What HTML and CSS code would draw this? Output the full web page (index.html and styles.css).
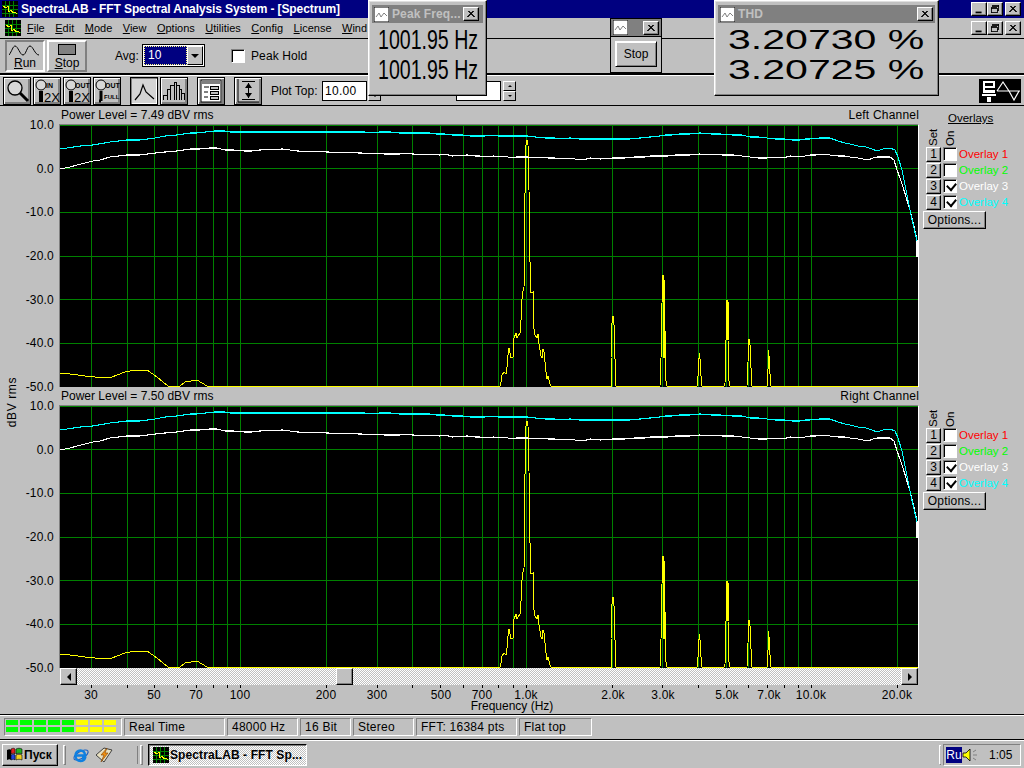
FILE: index.html
```html
<!DOCTYPE html>
<html lang="en">
<head>
<meta charset="utf-8">
<title>SpectraLAB</title>
<link rel="stylesheet" href="styles.css">
</head>
<body>
<svg class="defs" width="0" height="0" aria-hidden="true">
  <defs>
    <symbol id="appicon" viewBox="0 0 16 16">
      <rect width="16" height="16" fill="#000"/>
      <path d="M0 4.5H16M0 8.5H16M0 12.5H16M3.5 0V16M7.5 0V16M11.5 0V16" stroke="#008000" fill="none"/>
      <path d="M1 5L4 7L6 5L7 11L9 9L11 12L13 11L15 13" stroke="#ffff00" fill="none" shape-rendering="crispEdges"/>
    </symbol>
    <symbol id="winicon" viewBox="0 0 15 15">
      <rect width="15" height="15" fill="#fff" stroke="#000"/>
      <path d="M2 10L5 6L7 10L10 6L13 9" stroke="#808080" fill="none"/>
    </symbol>
    <symbol id="close" viewBox="0 0 16 14">
      <path d="M4 3L11 10M5 3L12 10M11 3L4 10M12 3L5 10" stroke="#000" fill="none" shape-rendering="crispEdges"/>
    </symbol>
    <symbol id="min" viewBox="0 0 16 14"><rect x="4" y="10" width="7" height="2" fill="#000"/></symbol>
    <symbol id="restore" viewBox="0 0 16 14">
      <path d="M5.5 2.5H12.5V8.5H10.5M5.5 2.5V5M5.5 3.5H12.5M3.5 5.5H10.5V11.5H3.5ZM3.5 6.5H10.5" stroke="#000" fill="none" shape-rendering="crispEdges"/>
    </symbol>
    <symbol id="traces" viewBox="60 125 858 262" overflow="hidden">
      <g shape-rendering="crispEdges" stroke="#008000" fill="none">
        <path d="M60 125.5H918M60 168.5H918M60 212.5H918M60 256.5H918M60 299.5H918M60 343.5H918"/>
        <path d="M91.5 125V387M127.5 125V387M154.5 125V387M177.5 125V387M196.5 125V387M213.5 125V387M227.5 125V387M240.5 125V387M326.5 125V387M377.5 125V387M412.5 125V387M440.5 125V387M463.5 125V387M482.5 125V387M498.5 125V387M513.5 125V387M526.5 125V387M612.5 125V387M662.5 125V387M698.5 125V387M726.5 125V387M748.5 125V387M767.5 125V387M784.5 125V387M798.5 125V387M811.5 125V387M897.5 125V387"/>
      </g>
      <g shape-rendering="crispEdges" fill="none">
        <polyline stroke="#ffff00" points="60,373 70,374 85,376 95,377 112,377 125,372 130,371 147,370 157,377 168,386 180,386 185,382 197,380 207,386 500,386 501,382 502,375 504,372 506,374 507,367 508,355 509,348 511,358 513,357 514,338 516,333 517,338 520,333 521,320 522,299 523,291 524,288 525,193 526,145 527,140 528,145 529,190 530,262 531,293 533,292 533,323 535,335 537,338 538,334 539,344 541,356 542,358 543,349 544,352 546,372 547,379 548,376 550,384 551,386 611,386 611,358 612,323 613,316 614,325 615,359 616,386 660,386 661,358 662,303 663,275 664,280 665,330 666,381 667,386 697,386 698,376 699,358 699,353 700,359 701,376 702,386 724,386 725,383 726,340 726,300 728,302 728,340 729,381 730,386 747,386 748,362 749,339 750,345 751,368 752,386 767,386 768,369 768,350 769,356 770,374 771,386 918,386"/>
        <path stroke="#ffff00" d="M663.5 275V358M664.5 280V358M727.5 300V340"/>
        <polyline stroke="#ffffff" stroke-width="1.1" points="60,169 70,167 77,165 85,163 93,161 100,160 110,157 127,155 140,155 155,153 165,152 177,151 190,149 200,149 210,148 217,148 225,150 233,150 245,151 252,151 260,150 282,149 290,150 297,151 327,152 360,153 385,154 400,154 405,153 412,154 440,155 445,154 452,156 467,155 475,156 480,156 485,157 494,156 500,157 505,156 511,158 516,157 527,157 535,158 540,157 548,158 555,158 562,159 567,158 575,159 583,160 590,158 600,159 613,158 625,158 635,157 645,157 650,156 660,156 668,156 675,155 682,155 690,155 700,154 708,155 715,154 722,155 733,155 742,156 750,157 758,158 767,158 775,157 783,158 790,156 800,157 810,155 816,155 823,154 830,155 838,156 845,156 850,157 858,158 868,160 873,158 877,157 885,157 890,157 894,160 897,170 900,178 903,187 906,197 910,210 913,222 917,240 917,257"/>
        <polyline stroke="#00ffff" stroke-width="1.1" points="60,149 67,148 80,146 93,145 110,142 127,140 140,140 155,138 165,136 177,135 190,133 197,133 205,132 215,131 225,131 230,132 365,132 372,133 380,132 390,132 400,133 430,133 436,134 445,134 452,135 463,135 470,136 485,136 490,135 498,136 510,136 520,136 527,136 535,137 545,138 555,138 562,139 570,138 580,139 590,139 600,139 613,139 620,139 630,139 640,138 650,137 660,136 665,135 672,135 680,134 690,134 700,133 712,134 720,134 733,135 742,135 750,137 758,137 767,138 775,139 785,139 792,140 800,140 805,139 810,139 820,138 830,138 838,141 845,143 850,144 858,146 866,147 872,149 877,151 883,149 890,148 895,150 898,157 902,170 905,185 908,200 911,215 914,228 917,241"/>
      </g>
    </symbol>
    <symbol id="logo" viewBox="0 0 42 24">
      <rect width="42" height="24" fill="#000"/>
      <path d="M4 2H16V9H6V11H16V14H4ZM6 4V7H14V4Z M3 15H17V17H3Z M8 18H12V23H8Z" fill="#fff" fill-rule="evenodd"/>
      <path d="M18 12L24 3L30 12L35 21L40 12M18 12H41" stroke="#fff" stroke-width="1.2" fill="none"/>
    </symbol>
  </defs>
</svg>

<header class="titlebar">
  <svg class="icon16 tb-icon"><use href="#appicon"/></svg>
  <span class="title">SpectraLAB - FFT Spectral Analysis System - [Spectrum]</span>
  <div class="capbtns">
    <button class="cap"><svg class="capglyph"><use href="#min"/></svg></button>
    <button class="cap"><svg class="capglyph"><use href="#restore"/></svg></button>
    <button class="cap cap-close"><svg class="capglyph"><use href="#close"/></svg></button>
  </div>
</header>

<nav class="menubar">
  <svg class="icon16 menu-icon"><use href="#appicon"/></svg>
  <span class="mi"><u>F</u>ile</span>
  <span class="mi"><u>E</u>dit</span>
  <span class="mi"><u>M</u>ode</span>
  <span class="mi"><u>V</u>iew</span>
  <span class="mi"><u>O</u>ptions</span>
  <span class="mi"><u>U</u>tilities</span>
  <span class="mi"><u>C</u>onfig</span>
  <span class="mi"><u>L</u>icense</span>
  <span class="mi"><u>W</u>ind</span>
  <div class="capbtns capbtns-menu">
    <button class="cap"><svg class="capglyph"><use href="#min"/></svg></button>
    <button class="cap"><svg class="capglyph"><use href="#restore"/></svg></button>
    <button class="cap cap-close"><svg class="capglyph"><use href="#close"/></svg></button>
  </div>
</nav>

<section class="tools1">
  <button class="bigbtn bigbtn-run">
    <svg class="bigicon" viewBox="0 0 32 13"><path d="M0 11C3 7 4 2 6 2C9 2 11 11 14 11C17 11 18 2 21 2C24 2 26 11 30 11" stroke="#000" fill="none"/></svg>
    <span class="biglabel"><u>R</u>un</span>
  </button>
  <button class="bigbtn">
    <span class="stopicon"></span>
    <span class="biglabel"><u>S</u>top</span>
  </button>
  <span class="avg">Avg:</span>
  <div class="combo"><span class="combo-val">10</span><span class="combo-arrow"><i class="tri"></i></span></div>
  <span class="check check-peak"></span>
  <span class="peak">Peak Hold</span>
</section>

<section class="tools2">
  <button class="tbtn"><svg viewBox="0 0 26 26" class="ticon"><circle cx="11" cy="10" r="7" fill="#d8d8d8" stroke="#000" stroke-width="1.3"/><path d="M16 15L24 23" stroke="#000" stroke-width="3"/></svg></button>
  <button class="tbtn"><svg viewBox="0 0 26 26" class="ticon"><circle cx="7" cy="7" r="5" fill="#d8d8d8" stroke="#000"/><rect x="5" y="13" width="4" height="11" fill="#000"/><text x="12" y="10" class="t-s">IN</text><text x="10" y="24" class="t-l">2X</text></svg></button>
  <button class="tbtn"><svg viewBox="0 0 26 26" class="ticon"><circle cx="7" cy="7" r="5" fill="#d8d8d8" stroke="#000"/><rect x="5" y="13" width="4" height="11" fill="#000"/><text x="11" y="10" class="t-s">OUT</text><text x="10" y="24" class="t-l">2X</text></svg></button>
  <button class="tbtn"><svg viewBox="0 0 26 26" class="ticon"><circle cx="7" cy="7" r="5" fill="#d8d8d8" stroke="#000"/><path d="M7 13V23M7 23H5" stroke="#000" stroke-width="3" fill="none"/><text x="11" y="10" class="t-s">OUT</text><text x="10" y="21" class="t-xs">FULL</text></svg></button>
  <button class="tbtn tbtn-on tbtn-gap"><svg viewBox="0 0 26 26" class="ticon"><path d="M4 22L9 16L12 7L15 14L23 21" stroke="#000" stroke-width="1.2" fill="none"/></svg></button>
  <button class="tbtn"><svg viewBox="0 0 26 26" class="ticon"><path d="M2 22V17H6V11H9V7H13V4H15V7H18V11H20V15H23V22M6 22V17M9 22V11M13 22V7M15 22V7M18 22V11M20 22V15" stroke="#000" fill="none" shape-rendering="crispEdges"/></svg></button>
  <button class="tbtn tbtn-gap2"><svg viewBox="0 0 26 26" class="ticon"><rect x="3" y="2" width="20" height="22" fill="#fff" stroke="#000"/><rect x="4" y="3" width="18" height="3" fill="#808080"/><path d="M6 9H11M6 14H10M6 19H10" stroke="#000"/><rect x="12.500" y="8.500" width="8" height="3" fill="#c0c0c0" stroke="#000"/><rect x="12.500" y="13.500" width="8" height="3" fill="#c0c0c0" stroke="#000"/><rect x="12.500" y="18.500" width="8" height="3" fill="#c0c0c0" stroke="#000"/></svg></button>
  <button class="tbtn tbtn-gap3"><svg viewBox="0 0 26 26" class="ticon"><path d="M7 3.500H20M7 21.500H20M13.500 5V20" stroke="#000" fill="none" shape-rendering="crispEdges"/><path d="M13.500 5L10 10H17ZM13.500 20L10 15H17Z" fill="#000"/><path d="M3 1V24H24" stroke="#000" fill="none"/></svg></button>
  <span class="plottop">Plot Top:</span>
  <span class="numbox">10.00</span>
  <div class="spin spin-a"><span class="spin-btn"></span><span class="spin-btn"><i class="tri tri-s"></i></span></div>
  <span class="numbox numbox-b"></span>
  <div class="spin"><span class="spin-btn"><i class="tri tri-s tri-up"></i></span><span class="spin-btn"><i class="tri tri-s"></i></span></div>
  <svg class="logo"><use href="#logo"/></svg>
</section>

<main class="main">
  <div class="ylabel"><span>dBV rms</span></div>
  <div class="charts">
    <section class="panel">
      <div class="head"><span>Power Level = 7.49 dBV rms</span><span>Left Channel</span></div>
      <div class="yticks"><span>10.0</span><span>0.0</span><span>-10.0</span><span>-20.0</span><span>-30.0</span><span>-40.0</span><span>-50.0</span></div>
      <div class="plot"><svg class="plot-svg"><use href="#traces"/></svg></div>
      <aside class="overlays">
        <div class="ov-title">Overlays</div>
        <div class="ov-heads"><span>Set</span><span>On</span></div>
        <div class="ov-row"><button class="setbtn">1</button><span class="check"></span><span class="ov-name c-red">Overlay 1</span></div>
        <div class="ov-row"><button class="setbtn">2</button><span class="check"></span><span class="ov-name c-green">Overlay 2</span></div>
        <div class="ov-row"><button class="setbtn">3</button><span class="check is-on"></span><span class="ov-name c-white">Overlay 3</span></div>
        <div class="ov-row"><button class="setbtn">4</button><span class="check is-on"></span><span class="ov-name c-cyan">Overlay 4</span></div>
        <button class="optbtn">Options...</button>
      </aside>
    </section>
    <section class="panel">
      <div class="head"><span>Power Level = 7.50 dBV rms</span><span>Right Channel</span></div>
      <div class="yticks"><span>10.0</span><span>0.0</span><span>-10.0</span><span>-20.0</span><span>-30.0</span><span>-40.0</span><span>-50.0</span></div>
      <div class="plot"><svg class="plot-svg"><use href="#traces"/></svg></div>
      <aside class="overlays">
        <div class="ov-title ov-title-hidden"></div>
        <div class="ov-heads"><span>Set</span><span>On</span></div>
        <div class="ov-row"><button class="setbtn">1</button><span class="check"></span><span class="ov-name c-red">Overlay 1</span></div>
        <div class="ov-row"><button class="setbtn">2</button><span class="check"></span><span class="ov-name c-green">Overlay 2</span></div>
        <div class="ov-row"><button class="setbtn">3</button><span class="check is-on"></span><span class="ov-name c-white">Overlay 3</span></div>
        <div class="ov-row"><button class="setbtn">4</button><span class="check is-on"></span><span class="ov-name c-cyan">Overlay 4</span></div>
        <button class="optbtn">Options...</button>
      </aside>
    </section>
    <div class="xaxis">
      <div class="scroll">
        <button class="scr-btn"><i class="tri tri-left"></i></button>
        <span class="scr-track scr-track-a"></span>
        <button class="scr-thumb"></button>
        <span class="scr-track"></span>
        <button class="scr-btn"><i class="tri tri-right"></i></button>
      </div>
      <svg class="xticks" viewBox="60 0 858 3"><path d="M91.5 0V3M127.5 0V3M154.5 0V3M177.5 0V3M196.5 0V3M213.5 0V3M227.5 0V3M240.5 0V3M326.5 0V3M377.5 0V3M412.5 0V3M440.5 0V3M463.5 0V3M482.5 0V3M498.5 0V3M513.5 0V3M526.5 0V3M612.5 0V3M662.5 0V3M698.5 0V3M726.5 0V3M748.5 0V3M767.5 0V3M784.5 0V3M798.5 0V3M811.5 0V3M897.5 0V3" stroke="#000" fill="none" shape-rendering="crispEdges"/></svg>
      <div class="xlabels">
        <span style="left:31px">30</span><span style="left:94px">50</span><span style="left:136px">70</span><span style="left:180px">100</span><span style="left:266px">200</span><span style="left:317px">300</span><span style="left:381px">500</span><span style="left:422px">700</span><span style="left:466px">1.0k</span><span style="left:553px">2.0k</span><span style="left:603px">3.0k</span><span style="left:667px">5.0k</span><span style="left:709px">7.0k</span><span style="left:751px">10.0k</span><span style="left:837px">20.0k</span>
      </div>
      <div class="xtitle">Frequency (Hz)</div>
    </div>
  </div>
</main>

<footer class="status">
  <div class="cell cell-led">
    <i class="led g"></i><i class="led g"></i><i class="led g"></i><i class="led g"></i><i class="led g"></i><i class="led y"></i><i class="led y"></i><i class="led y"></i>
    <i class="led g"></i><i class="led g"></i><i class="led g"></i><i class="led g"></i><i class="led g"></i><i class="led y"></i><i class="led y"></i><i class="led y"></i>
  </div>
  <div class="cell">Real Time</div>
  <div class="cell">48000 Hz</div>
  <div class="cell">16 Bit</div>
  <div class="cell">Stereo</div>
  <div class="cell">FFT: 16384 pts</div>
  <div class="cell">Flat top</div>
</footer>

<footer class="taskbar">
  <button class="start">
    <svg class="flag" viewBox="0 0 18 16"><path d="M1 3C3 2 4 2 5 3V13C4 12 3 12 1 13Z" fill="#000"/><path d="M5 2C7 1 8 1 9 2V7C8 6 7 6 5 7Z" fill="#e02020" stroke="#000" stroke-width=".6"/><path d="M10 2C12 1 14 1 16 2V7C14 6 12 6 10 7Z" fill="#20b020" stroke="#000" stroke-width=".6"/><path d="M5 8C7 7 8 7 9 8V13C8 12 7 12 5 13Z" fill="#2040e0" stroke="#000" stroke-width=".6"/><path d="M10 8C12 7 14 7 16 8V13C14 12 12 12 10 13Z" fill="#f0d020" stroke="#000" stroke-width=".6"/></svg>
    <span>Пуск</span>
  </button>
  <span class="grip grip-a"></span>
  <svg class="quick quick-ie" viewBox="0 0 18 18"><ellipse cx="9" cy="9" rx="8" ry="3.500" fill="none" stroke="#2060c0" stroke-width="1.2" transform="rotate(-30 9 9)"/><path d="M4 9.500H13C13 6 11 4.500 8.500 4.500C5.500 4.500 3.500 6.500 3.500 9.500C3.500 12.500 5.500 15 8.500 15C11 15 12.500 13.500 13 12H10" fill="none" stroke="#1080e0" stroke-width="2.400"/></svg>
  <svg class="quick quick-wa" viewBox="0 0 18 18"><path d="M1 9L9 2L17 4L9 16Z" fill="#e8e0c0" stroke="#404040"/><path d="M12 2L6 9H9L6 16L13 7H10Z" fill="#f09010" stroke="#804000" stroke-width=".6"/></svg>
  <span class="grip grip-b"></span>
  <button class="task">
    <svg class="icon16"><use href="#appicon"/></svg>
    <span>SpectraLAB - FFT Sp...</span>
  </button>
  <span class="grip grip-c"></span>
  <div class="tray">
    <span class="ru">Ru</span>
    <svg class="spk" viewBox="0 0 16 16"><path d="M1 6H4L8 2V14L4 10H1Z" fill="#ffff00" stroke="#000" stroke-width=".8"/><path d="M11 5L14 3M11 8H15M11 11L14 13" stroke="#808080"/></svg>
    <span class="clock">1:05</span>
  </div>
</footer>

<div class="float float-peak">
  <div class="fcap">
    <svg class="ficon"><use href="#winicon"/></svg>
    <span class="ftitle">Peak Freq...</span>
    <button class="cap fclose"><svg class="capglyph"><use href="#close"/></svg></button>
  </div>
  <div class="peakval">1001.95 Hz</div>
  <div class="peakval">1001.95 Hz</div>
</div>

<div class="float float-stop">
  <div class="fcap">
    <svg class="ficon"><use href="#winicon"/></svg>
    <button class="cap fclose"><svg class="capglyph"><use href="#close"/></svg></button>
  </div>
  <button class="stopbtn">Stop</button>
</div>

<div class="float float-thd">
  <div class="fcap">
    <svg class="ficon"><use href="#winicon"/></svg>
    <span class="ftitle">THD</span>
    <button class="cap fclose"><svg class="capglyph"><use href="#close"/></svg></button>
  </div>
  <div class="thdval">3.20730 %</div>
  <div class="thdval">3.20725 %</div>
</div>
</body>
</html>
```
FILE: styles.css
```css
* { box-sizing: border-box; }
html, body { margin: 0; padding: 0; }
body {
  width: 1024px; height: 768px; position: relative; overflow: hidden;
  background: #c0c0c0; color: #000;
  font: 12px/14px "Liberation Sans", Arial, sans-serif;
}
button { font: inherit; color: inherit; padding: 0; margin: 0; background: #c0c0c0; }
.defs { position: absolute; }
u { text-decoration: underline; }

.titlebar { height: 18px; background: #000080; display: flex; align-items: center; padding-left: 2px; }
.icon16 { width: 16px; height: 16px; display: block; flex: none; }
.title { margin-left: 3px; color: #fff; font-weight: bold; font-size: 12px; letter-spacing: -.1px; white-space: nowrap; }
.capbtns { margin-left: auto; display: flex; gap: 0; padding-right: 3px; }
.cap {
  width: 16px; height: 14px; display: block; flex: none;
  border: 1px solid; border-color: #fff #000 #000 #fff;
  box-shadow: inset -1px -1px #808080;
}
.cap-close { margin-left: 2px; }
.capglyph { width: 14px; height: 12px; display: block; }

.menubar { height: 21px; display: flex; align-items: center; padding-left: 5px; gap: 10.5px; border-bottom: 1px solid #000; font-size: 11px; }
.menu-icon { margin-right: -4.5px; }
.capbtns-menu { gap: 0; }

.tools1 { height: 36px; display: flex; align-items: center; padding: 0 0 2px 5px; border-bottom: 1px solid #000; box-shadow: inset 0 -1px #000; font-size: 12px; }
.bigbtn {
  width: 40px; height: 32px; margin-right: 2px; display: flex; flex-direction: column; align-items: center;
  border: 2px solid; border-color: #fff #808080 #808080 #fff; padding-top: 2px; font-size: 12px;
}
.bigbtn-run { border-color: #808080 #fff #fff #808080; }
.bigicon { width: 32px; height: 13px; display: block; }
.stopicon { width: 18px; height: 11px; background: #808080; border: 1px solid #000; display: block; margin-bottom: 2px; }
.biglabel { line-height: 13px; }
.avg { margin-left: 26px; width: 27px; }
.combo { width: 63px; height: 23px; border: 1px solid #000; background: #fff; display: flex; padding: 1px; }
.combo-val { flex: 1; background: #000080; color: #fff; font-size: 12px; line-height: 17px; padding-left: 3px; border: 1px dotted #ffff80; }
.combo-arrow { width: 16px; display: flex; align-items: center; justify-content: center; border: 1px solid; border-color: #fff #000 #000 #fff; background: #c0c0c0; }
.tri { display: block; width: 0; height: 0; border-left: 4px solid transparent; border-right: 4px solid transparent; border-top: 4px solid #000; }
.tri-s { border-left-width: 2px; border-right-width: 2px; border-top-width: 2px; }
.tri-up { border-top: 0; border-bottom: 2px solid #000; }
.tri-left { border: 0; border-top: 4px solid transparent; border-bottom: 4px solid transparent; border-right: 4px solid #000; }
.tri-right { border: 0; border-top: 4px solid transparent; border-bottom: 4px solid transparent; border-left: 4px solid #000; }
.check {
  width: 14px; height: 14px; display: block; flex: none; background: #fff; position: relative;
  border: 1px solid; border-color: #808080 #fff #fff #808080; box-shadow: inset 1px 1px #000;
}
.check.is-on::after {
  content: ""; position: absolute; left: 3px; top: 2px; width: 7px; height: 5px;
  border-left: 2px solid #000; border-bottom: 2px solid #000; transform: rotate(-50deg) skewX(-5deg);
}
.check-peak { margin-left: 26px; }
.peak { margin-left: 6px; letter-spacing: .1px; }

.tools2 { height: 31px; border-top: 1px solid #fff; border-bottom: 1px solid #000; display: flex; align-items: center; padding-left: 3px; }
.tbtn {
  width: 28px; height: 28px; margin-right: 2px; flex: none;
  border: 1px solid #000; box-shadow: inset 1px 1px #fff, inset -2px -2px #808080;
  display: flex; align-items: center; justify-content: center;
}
.tbtn-on { background: #d4d4d4; box-shadow: inset 1px 1px #808080, inset -1px -1px #fff; }
.tbtn-gap { margin-left: 7px; }
.tbtn-gap2 { margin-left: 7px; }
.tbtn-gap3 { margin-left: 7px; }
.ticon { width: 26px; height: 26px; display: block; }
.t-s { font: bold 7px "Liberation Sans", sans-serif; }
.t-xs { font: bold 6px "Liberation Sans", sans-serif; }
.t-l { font: 13px "Liberation Sans", sans-serif; }
.plottop { margin-left: 7px; width: 51px; white-space: nowrap; }
.numbox { width: 45px; height: 20px; background: #fff; border: 1px solid #000; line-height: 18px; padding-left: 2px; letter-spacing: .3px; flex: none; }
.numbox-b { margin-left: 75px; }
.spin { width: 13px; height: 20px; margin-left: 1px; display: flex; flex-direction: column; flex: none; }
.spin-a { margin-left: 1px; }
.spin-btn { flex: 1; display: flex; align-items: center; justify-content: center; border: 1px solid; border-color: #fff #000 #000 #fff; }
.numbox-b + .spin { margin-left: 2px; }
.logo { width: 42px; height: 24px; margin-left: auto; margin-right: 3px; display: block; }

.main { height: 609px; display: flex; border-bottom: 1px solid #000; }
.ylabel { width: 24px; height: 562px; display: flex; align-items: center; justify-content: center; padding-top: 30px; }
.ylabel span { writing-mode: vertical-rl; transform: rotate(180deg); white-space: nowrap; letter-spacing: .6px; }
.charts { flex: 1; display: flex; flex-direction: column; }
.panel { display: grid; grid-template-columns: 35px 860px 1fr; grid-template-rows: 18px 263px; }
.head { grid-column: 2; grid-row: 1; display: flex; justify-content: space-between; align-items: center; padding: 0 0 0 2px; white-space: nowrap; }
.head span:last-child { letter-spacing: .2px; }
.yticks { grid-column: 1; grid-row: 2; display: flex; flex-direction: column; justify-content: space-between; margin-top: -5px; margin-bottom: -7px; padding-right: 5px; text-align: right; line-height: 13px; letter-spacing: .2px; }
.plot { grid-column: 2; grid-row: 2; border-left: 1px solid #808080; border-top: 1px solid #808080; border-right: 1px solid #fff; background: #000; }
.plot-svg { width: 858px; height: 262px; display: block; }
.overlays { grid-column: 3; grid-row: 1 / 3; padding-left: 7px; display: flex; flex-direction: column; align-items: flex-start; }
.ov-title { height: 18px; margin-top: 5px; width: 98px; padding-left: 22px; text-decoration: underline; white-space: nowrap; line-height: 14px; font-size: 11.5px; }
.ov-title-hidden { visibility: hidden; height: 18px; margin-top: 5px; }
.ov-heads { display: flex; height: 17px; gap: 3px; padding-left: 0; }
.ov-heads span { writing-mode: vertical-rl; transform: rotate(180deg); width: 13px; text-align: left; line-height: 13px; margin-left: 1px; font-size: 11.5px; }
.ov-row { display: flex; align-items: center; height: 16px; gap: 2px; }
.setbtn { width: 15px; height: 15px; border: 1px solid; border-color: #fff #000 #000 #fff; box-shadow: inset -1px -1px #808080; line-height: 12px; font-size: 12px; flex: none; }
.ov-name { margin-left: 0; font-size: 11.5px; letter-spacing: 0; white-space: nowrap; }
.c-red { color: #ff0000; } .c-green { color: #00ff00; } .c-white { color: #fff; } .c-cyan { color: #00ffff; }
.optbtn { width: 63px; height: 18px; margin: 1px 0 0 -3px; border: 1px solid; border-color: #fff #000 #000 #fff; box-shadow: inset -1px -1px #808080; line-height: 14px; letter-spacing: .2px; }

.xaxis { padding-left: 36px; display: flex; flex-direction: column; }
.scroll { width: 858px; height: 17px; display: flex; }
.scr-btn, .scr-thumb { width: 17px; height: 17px; flex: none; border: 1px solid; border-color: #fff #000 #000 #fff; box-shadow: inset -1px -1px #808080; display: flex; align-items: center; justify-content: center; }
.scr-track { flex: 1; background: repeating-conic-gradient(#fff 0 25%, #c0c0c0 0 50%) 0 0 / 2px 2px; }
.scr-track-a { flex: 0 0 259px; }
.xticks { width: 858px; height: 3px; display: block; }
.xlabels { position: relative; height: 11px; margin-top: 2px; width: 858px; }
.xlabels span { position: absolute; top: 0; transform: translateX(-50%); white-space: nowrap; line-height: 11px; letter-spacing: .2px; }
.xtitle { width: 858px; padding-left: 46px; text-align: center; line-height: 11px; margin-top: 0; }

.status { height: 25px; display: grid; grid-template-columns: 118px 101px 71px 51px 61px 101px 73px; gap: 2px; padding: 2px 0 3px 4px; border-bottom: 1px solid #000; border-top: 1px solid #fff; }
.cell { border: 1px solid; border-color: #808080 #fff #fff #808080; padding-left: 4px; line-height: 16px; letter-spacing: .25px; white-space: nowrap; }
.cell-led { display: grid; grid-template-columns: repeat(8, 12px); grid-auto-rows: 5px; column-gap: 2px; row-gap: 2px; padding: 1px 0 0 1px; }
.led.g { background: #00ff00; } .led.y { background: #ffff00; }

.taskbar { height: 28px; border-top: 1px solid #fff; display: flex; align-items: center; padding-left: 2px; position: relative; }
.start { width: 56px; height: 22px; display: flex; align-items: center; padding-left: 3px; gap: 0; border: 1px solid; border-color: #fff #000 #000 #fff; box-shadow: inset -1px -1px #808080; font-weight: bold; font-size: 12px; flex: none; }
.flag { width: 18px; height: 16px; display: block; }
.grip { width: 3px; height: 20px; border: 1px solid; border-color: #fff #808080 #808080 #fff; flex: none; display: block; }
.grip-a { margin-left: 5px; }
.quick { width: 18px; height: 18px; display: block; flex: none; }
.quick-ie { margin-left: 6px; }
.quick-wa { margin-left: 5px; }
.grip-b { margin-left: 27px; box-shadow: -4px 0 0 -1px #808080; }
.task { width: 159px; height: 22px; margin-left: 5px; display: flex; align-items: center; gap: 1px; padding-left: 4px; border: 1px solid; border-color: #000 #fff #fff #000; font-weight: bold; font-size: 12px; letter-spacing: .1px; flex: none; white-space: nowrap; background: repeating-conic-gradient(#fff 0 25%, #c0c0c0 0 50%) 0 0 / 2px 2px; box-shadow: inset 1px 1px #808080; }
.grip-c { margin-left: auto; width: 2px; border-right: 0; }
.tray { width: 78px; height: 22px; margin: 0 3px 0 2px; border: 1px solid; border-color: #808080 #fff #fff #808080; display: flex; align-items: center; padding-left: 2px; }
.ru { width: 16px; height: 16px; background: #000080; color: #fff; line-height: 16px; text-align: center; font-size: 12px; }
.spk { width: 16px; height: 16px; display: block; }
.clock { margin-left: 11px; }

.float { position: absolute; background: #c0c0c0; border: 1px solid; border-color: #fff #000 #000 #fff; box-shadow: inset -1px -1px #808080, inset 1px 1px #dfdfdf; }
.float-peak { left: 368px; top: 0; width: 119px; height: 96px; padding: 4px 3px; border-top-color: #fff; }
.float-thd { left: 714px; top: 0; width: 225px; height: 96px; padding: 4px 3px; }
.float-stop { left: 610px; top: 18px; width: 52px; height: 55px; padding: 1px; border: 1px solid #000; box-shadow: none; }
.fcap { height: 18px; background: #808080; display: flex; align-items: center; padding-left: 2px; }
.float-stop .fcap { border-bottom: 1px solid #000; height: 18px; margin: -1px -1px 0; }
.ficon { width: 15px; height: 15px; display: block; flex: none; }
.ftitle { margin-left: 3px; color: #c0c0c0; font-weight: bold; letter-spacing: .1px; white-space: nowrap; }
.fclose { margin-left: auto; margin-right: 2px; }
.float-peak .fclose { margin-right: 4px; }
.peakval { font-size: 27px; line-height: 29px; height: 30px; transform: scaleX(.725); transform-origin: 0 50%; margin-left: 6px; white-space: nowrap; }
.fcap + .peakval { margin-top: 3px; }
.thdval { font-size: 27px; line-height: 29px; height: 30px; transform: scaleX(1.52); transform-origin: 0 50%; margin-left: 10px; white-space: nowrap; }
.fcap + .thdval { margin-top: 3px; }
.stopbtn { width: 42px; height: 26px; display: block; margin: 4px 0 0 3px; border: 1px solid; border-color: #fff #000 #000 #fff; box-shadow: inset 1px 1px #fff, inset -1px -1px #808080; }
```
